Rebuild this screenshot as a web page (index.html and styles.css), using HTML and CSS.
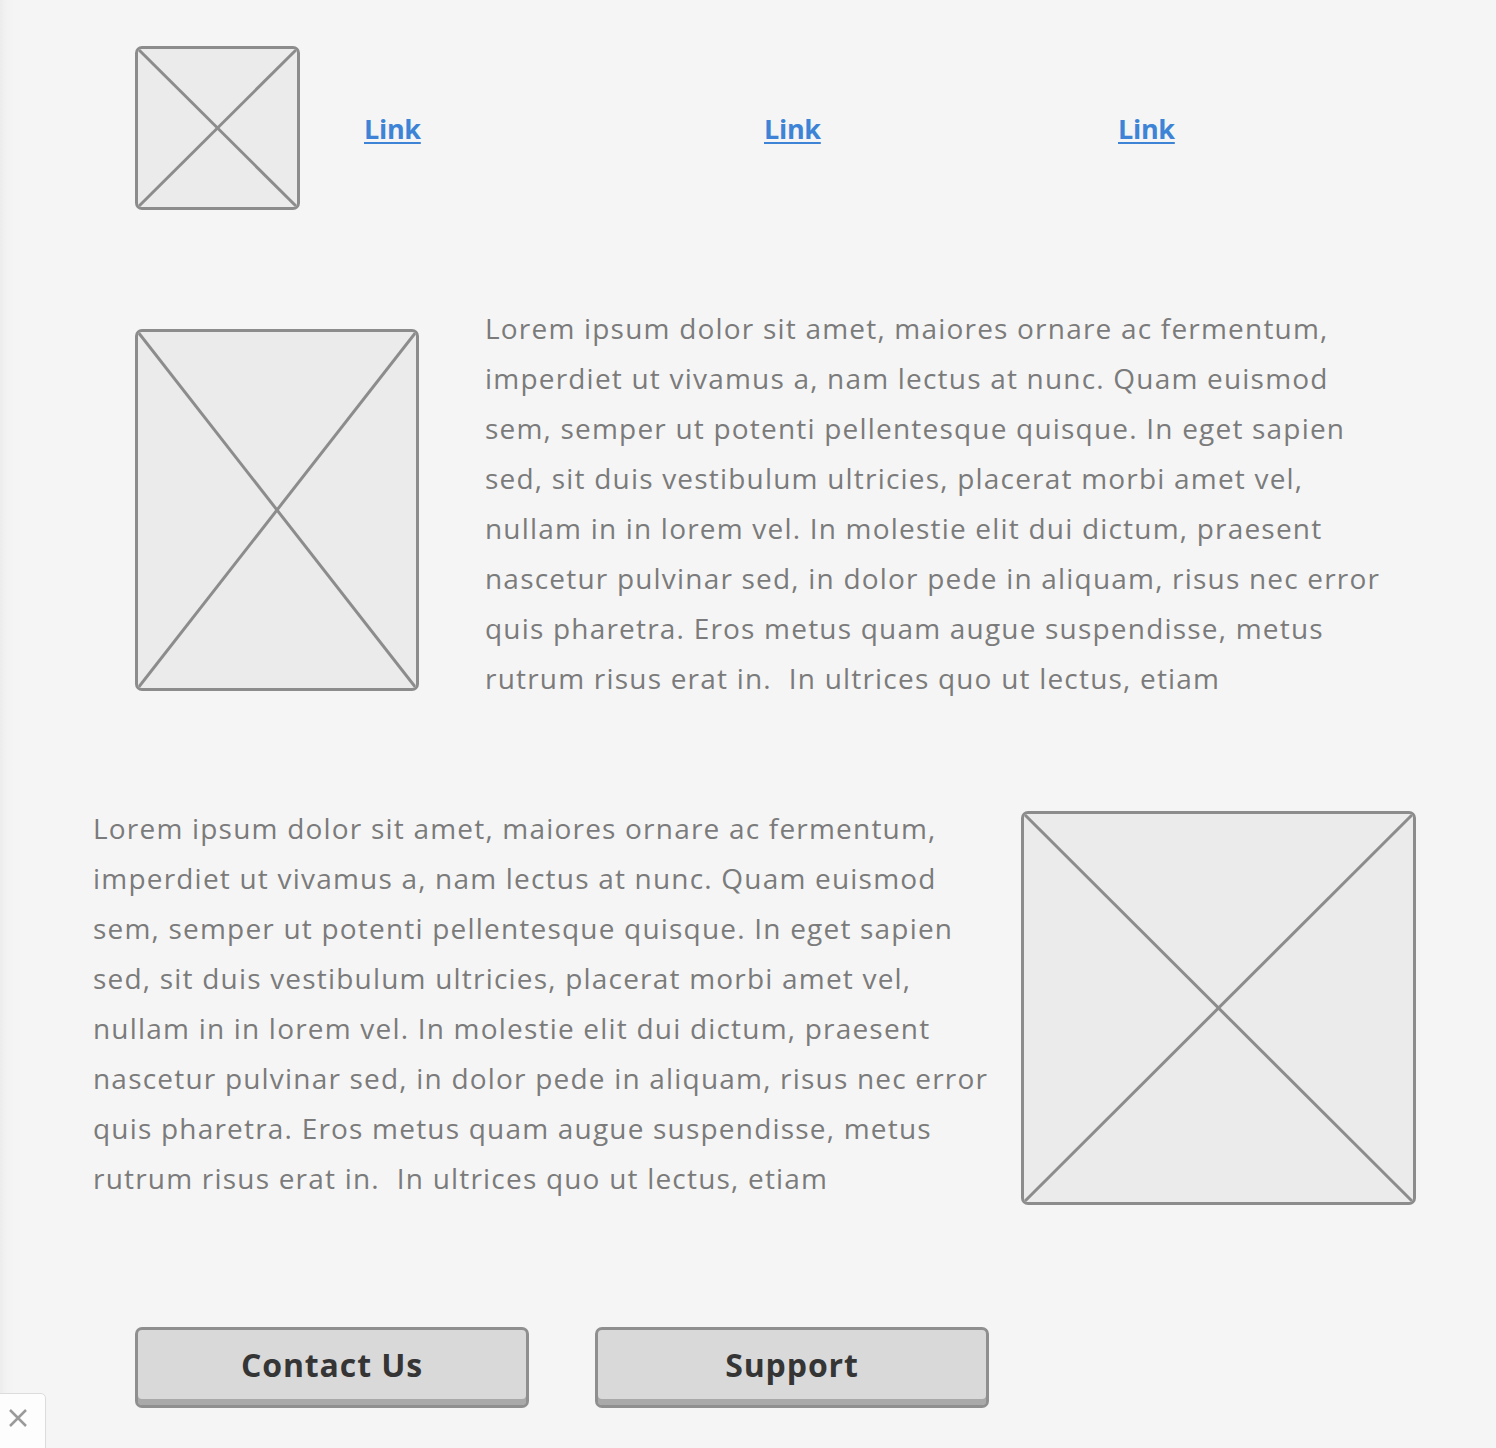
FILE: index.html
```html
<!DOCTYPE html>
<html>
<head>
<meta charset="utf-8">
<link rel="stylesheet" href="styles.css">
</head>
<body>
<div class="page">
  <header class="top">
    <div class="ph ph-logo">
      <svg viewBox="0 0 100 100" preserveAspectRatio="none"><line x1="0" y1="0" x2="100" y2="100" vector-effect="non-scaling-stroke"/><line x1="100" y1="0" x2="0" y2="100" vector-effect="non-scaling-stroke"/></svg>
    </div>
    <nav class="nav">
      <a href="#" class="link l1">Link</a>
      <a href="#" class="link l2">Link</a>
      <a href="#" class="link l3">Link</a>
    </nav>
  </header>

  <section class="row row-a">
    <div class="ph ph-a">
      <svg viewBox="0 0 100 100" preserveAspectRatio="none"><line x1="0" y1="0" x2="100" y2="100" vector-effect="non-scaling-stroke"/><line x1="100" y1="0" x2="0" y2="100" vector-effect="non-scaling-stroke"/></svg>
    </div>
    <p class="copy">Lorem ipsum dolor sit amet, maiores ornare ac fermentum,<br>imperdiet ut vivamus a, nam lectus at nunc. Quam euismod<br>sem, semper ut potenti pellentesque quisque. In eget sapien<br>sed, sit duis vestibulum ultricies, placerat morbi amet vel,<br>nullam in in lorem vel. In molestie elit dui dictum, praesent<br>nascetur pulvinar sed, in dolor pede in aliquam, risus nec error<br>quis pharetra. Eros metus quam augue suspendisse, metus<br>rutrum risus erat in.&nbsp; In ultrices quo ut lectus, etiam</p>
  </section>

  <section class="row row-b">
    <p class="copy">Lorem ipsum dolor sit amet, maiores ornare ac fermentum,<br>imperdiet ut vivamus a, nam lectus at nunc. Quam euismod<br>sem, semper ut potenti pellentesque quisque. In eget sapien<br>sed, sit duis vestibulum ultricies, placerat morbi amet vel,<br>nullam in in lorem vel. In molestie elit dui dictum, praesent<br>nascetur pulvinar sed, in dolor pede in aliquam, risus nec error<br>quis pharetra. Eros metus quam augue suspendisse, metus<br>rutrum risus erat in.&nbsp; In ultrices quo ut lectus, etiam</p>
    <div class="ph ph-b">
      <svg viewBox="0 0 100 100" preserveAspectRatio="none"><line x1="0" y1="0" x2="100" y2="100" vector-effect="non-scaling-stroke"/><line x1="100" y1="0" x2="0" y2="100" vector-effect="non-scaling-stroke"/></svg>
    </div>
  </section>

  <footer class="actions">
    <button class="btn">Contact Us</button>
    <button class="btn">Support</button>
  </footer>
</div>
<div class="close-box">
  <svg viewBox="0 0 20 20" width="20" height="20"><path d="M2 2 L18 18 M18 2 L2 18" /></svg>
</div>
</body>
</html>
```
FILE: styles.css
```css
html, body {
  margin: 0;
  padding: 0;
}
body {
  width: 1496px;
  height: 1448px;
  overflow: hidden;
  background: linear-gradient(to right, #ececec 0, #f2f2f2 6px, #f5f5f5 14px);
  font-family: "Open Sans", Lato, sans-serif;
  position: relative;
}
.page {
  display: flex;
  flex-direction: column;
}
.ph {
  box-sizing: border-box;
  border: 3px solid #8c8c8c;
  border-radius: 7px;
  background: #ebebeb;
  flex: none;
  overflow: hidden;
}
.ph svg {
  display: block;
  width: 100%;
  height: 100%;
}
.ph line {
  stroke: #8c8c8c;
  stroke-width: 3;
}
.top {
  display: flex;
  align-items: center;
  padding: 46px 0 0 135px;
  height: 164px;
}
.ph-logo {
  width: 165px;
  height: 164px;
}
.nav {
  display: flex;
  align-items: center;
  height: 100%;
}
.link {
  display: block;
  width: 56px;
  color: #3d84d6;
  font-weight: 700;
  font-size: 27px;
  letter-spacing: -0.3px;
  text-decoration: underline;
  text-decoration-thickness: 2px;
  text-underline-offset: 3px;
  line-height: 1;
  white-space: nowrap;
}
.l1 { margin-left: 64px; }
.l2 { margin-left: 344px; }
.l3 { margin-left: 298px; }

.row {
  display: flex;
  align-items: flex-start;
}
.row-a {
  padding: 93px 0 0 135px;
}
.ph-a {
  width: 284px;
  height: 362px;
  margin-top: 26px;
}
.copy {
  margin: 0;
  color: #7b7b7b;
  font-size: 28px;
  letter-spacing: 1.2px;
  line-height: 50px;
  white-space: nowrap;
}
.row-a .copy {
  margin-left: 66px;
}
.row-b {
  padding: 100px 0 0 93px;
}
.row-b .copy {
  width: 928px;
}
.ph-b {
  width: 395px;
  height: 394px;
  margin-top: 8px;
}
.actions {
  display: flex;
  gap: 66px;
  padding: 122px 0 0 135px;
}
.btn {
  box-sizing: border-box;
  width: 394px;
  height: 81px;
  background: #d9d9d9;
  border: 3px solid #8f8f8f;
  border-radius: 7px;
  box-shadow: inset 0 -6px 0 #a9a9a9;
  font-family: "Open Sans", Lato, sans-serif;
  font-weight: 700;
  font-size: 32px;
  letter-spacing: 0.9px;
  color: #353535;
  padding: 0 0 6px;
  cursor: pointer;
}
.close-box {
  position: absolute;
  left: -4px;
  top: 1393px;
  width: 50px;
  height: 60px;
  box-sizing: border-box;
  background: #fdfdfd;
  border: 1px solid #dcdcdc;
  border-radius: 5px;
  display: flex;
  align-items: flex-start;
  justify-content: flex-start;
  padding-top: 14px;
  padding-left: 11px;
}
.close-box path {
  stroke: #9a9a9a;
  stroke-width: 2.5;
  fill: none;
}
```
